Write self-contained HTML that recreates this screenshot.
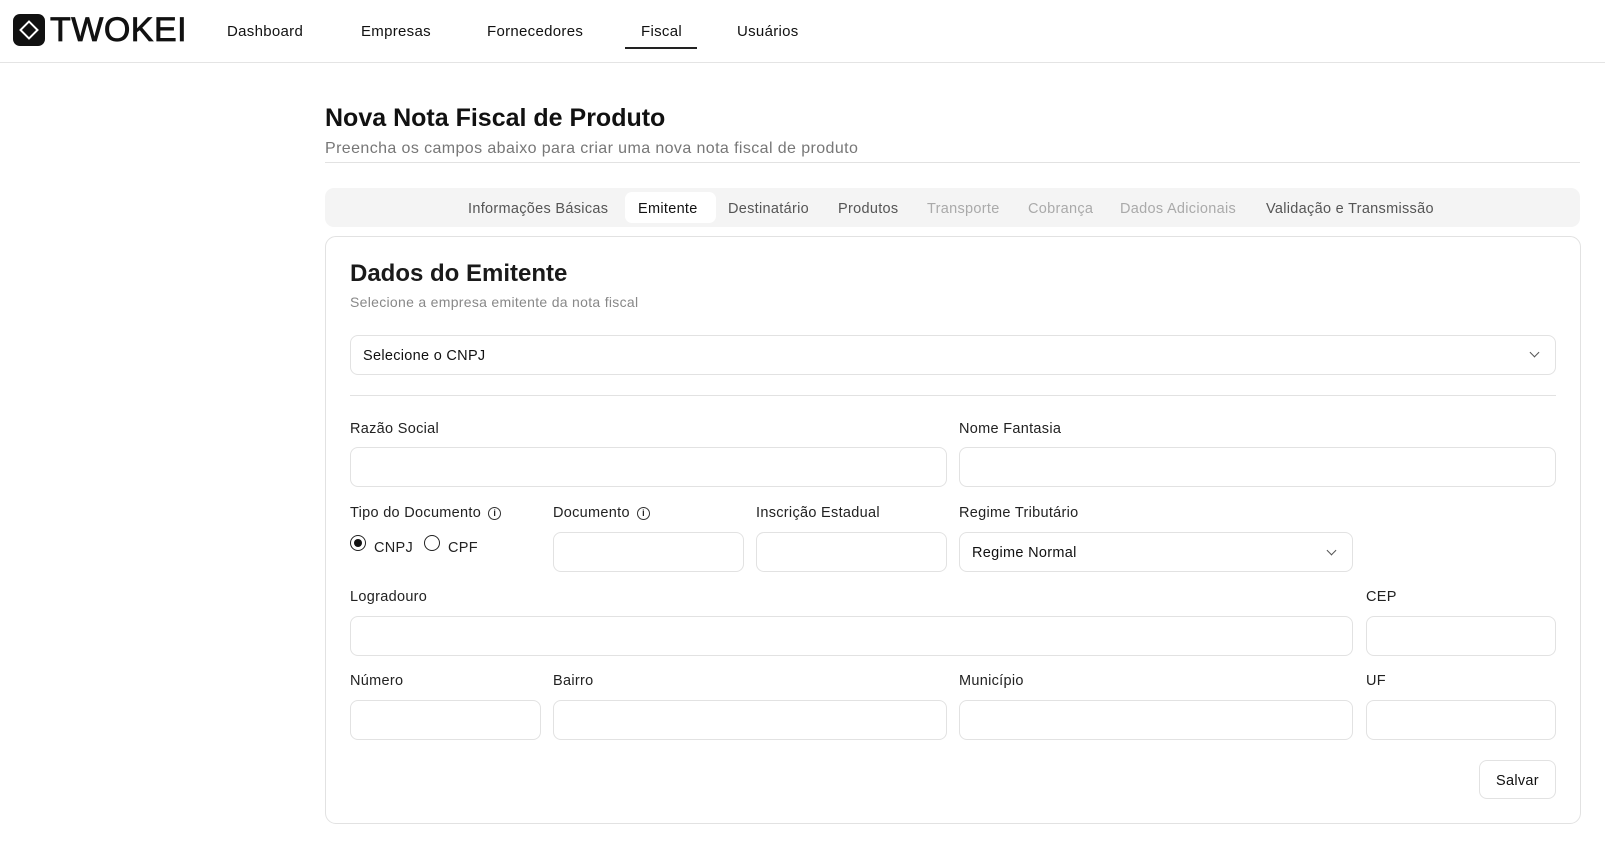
<!DOCTYPE html>
<html><head><meta charset="utf-8"><style>
*{box-sizing:border-box;margin:0;padding:0}
body{width:1605px;height:849px;background:#fff;font-family:"Liberation Sans",sans-serif;color:#111;position:relative;overflow:hidden}
.a{position:absolute;white-space:nowrap}
.hdr{position:absolute;left:0;top:0;width:1605px;height:63px;border-bottom:1px solid #e4e4e4}
.nav{font-size:15px;top:23px;letter-spacing:.3px}
.lbl{font-size:14.5px;color:#222;letter-spacing:.3px}
.in{position:absolute;border:1px solid #e2e2e2;border-radius:8px;height:40px;background:#fff}
.tab{font-size:14.5px;top:201px;color:#555;letter-spacing:.3px}
.tab.dis{color:#aaa}
.chev{position:absolute;width:7px;height:7px;border-right:1.3px solid #555;border-bottom:1.3px solid #555;transform:rotate(45deg)}
.info{display:inline-block;width:13px;height:13px;border:1.3px solid #333;border-radius:50%;font-size:9px;text-align:center;line-height:11px;margin-left:7px;vertical-align:1px;font-weight:bold;letter-spacing:0}
</style></head><body>
<div class="hdr"></div>
<div class="a" style="left:13px;top:14px;width:32px;height:32px;background:#111;border-radius:7px"></div>
<div class="a" style="left:22px;top:23px;width:14px;height:14px;border:2px solid #fff;transform:rotate(45deg)"></div>
<div class="a" style="left:50px;top:11px;font-size:34px;font-weight:normal;letter-spacing:0.5px;-webkit-text-stroke:0.8px #111">TWOKEI</div>
<div class="a nav" style="left:227px">Dashboard</div>
<div class="a nav" style="left:361px">Empresas</div>
<div class="a nav" style="left:487px">Fornecedores</div>
<div class="a nav" style="left:641px">Fiscal</div>
<div class="a nav" style="left:737px">Usuários</div>
<div class="a" style="left:625px;top:47px;width:72px;height:2px;background:#222"></div>

<div class="a" style="left:325px;top:104px;font-size:25px;font-weight:bold">Nova Nota Fiscal de Produto</div>
<div class="a" style="left:325px;top:140px;font-size:16px;color:#777;letter-spacing:.4px">Preencha os campos abaixo para criar uma nova nota fiscal de produto</div>
<div class="a" style="left:325px;top:162px;width:1255px;height:1px;background:#e2e2e2"></div>

<div class="a" style="left:325px;top:188px;width:1255px;height:39px;background:#f4f4f4;border-radius:9px"></div>
<div class="a" style="left:625px;top:192px;width:91px;height:31px;background:#fff;border-radius:7px"></div>
<div class="a tab" style="left:468px">Informações Básicas</div>
<div class="a tab" style="left:638px;color:#111">Emitente</div>
<div class="a tab" style="left:728px">Destinatário</div>
<div class="a tab" style="left:838px">Produtos</div>
<div class="a tab dis" style="left:927px">Transporte</div>
<div class="a tab dis" style="left:1028px">Cobrança</div>
<div class="a tab dis" style="left:1120px">Dados Adicionais</div>
<div class="a tab" style="left:1266px">Validação e Transmissão</div>

<div class="a" style="left:325px;top:236px;width:1256px;height:588px;border:1px solid #e2e2e2;border-radius:11px"></div>
<div class="a" style="left:350px;top:260px;font-size:24px;font-weight:bold;color:#1a1a1a">Dados do Emitente</div>
<div class="a" style="left:350px;top:294px;font-size:14px;color:#888;letter-spacing:.3px">Selecione a empresa emitente da nota fiscal</div>
<div class="in" style="left:350px;top:335px;width:1206px"></div>
<div class="a" style="left:363px;top:348px;font-size:14.5px;letter-spacing:.3px">Selecione o CNPJ</div>
<div class="chev" style="left:1531px;top:349px"></div>
<div class="a" style="left:350px;top:395px;width:1206px;height:1px;background:#e2e2e2"></div>

<div class="a lbl" style="left:350px;top:421px">Razão Social</div>
<div class="a lbl" style="left:959px;top:421px">Nome Fantasia</div>
<div class="in" style="left:350px;top:447px;width:597px"></div>
<div class="in" style="left:959px;top:447px;width:597px"></div>

<div class="a lbl" style="left:350px;top:505px">Tipo do Documento<span class="info">i</span></div>
<div class="a lbl" style="left:553px;top:505px">Documento<span class="info">i</span></div>
<div class="a lbl" style="left:756px;top:505px">Inscrição Estadual</div>
<div class="a lbl" style="left:959px;top:505px">Regime Tributário</div>
<div class="a" style="left:350px;top:535px;width:16px;height:16px;border:1.5px solid #222;border-radius:50%"></div>
<div class="a" style="left:354px;top:539px;width:8px;height:8px;background:#111;border-radius:50%"></div>
<div class="a lbl" style="left:374px;top:540px">CNPJ</div>
<div class="a" style="left:424px;top:535px;width:16px;height:16px;border:1.5px solid #222;border-radius:50%"></div>
<div class="a lbl" style="left:448px;top:540px">CPF</div>
<div class="in" style="left:553px;top:532px;width:191px"></div>
<div class="in" style="left:756px;top:532px;width:191px"></div>
<div class="in" style="left:959px;top:532px;width:394px"></div>
<div class="a" style="left:972px;top:545px;font-size:14.5px;letter-spacing:.3px">Regime Normal</div>
<div class="chev" style="left:1328px;top:547px"></div>

<div class="a lbl" style="left:350px;top:589px">Logradouro</div>
<div class="a lbl" style="left:1366px;top:589px">CEP</div>
<div class="in" style="left:350px;top:616px;width:1003px"></div>
<div class="in" style="left:1366px;top:616px;width:190px"></div>

<div class="a lbl" style="left:350px;top:673px">Número</div>
<div class="a lbl" style="left:553px;top:673px">Bairro</div>
<div class="a lbl" style="left:959px;top:673px">Município</div>
<div class="a lbl" style="left:1366px;top:673px">UF</div>
<div class="in" style="left:350px;top:700px;width:191px"></div>
<div class="in" style="left:553px;top:700px;width:394px"></div>
<div class="in" style="left:959px;top:700px;width:394px"></div>
<div class="in" style="left:1366px;top:700px;width:190px"></div>

<div class="in" style="left:1479px;top:760px;width:77px;height:39px"></div>
<div class="a" style="left:1496px;top:773px;font-size:14.5px;letter-spacing:.3px">Salvar</div>
</body></html>
